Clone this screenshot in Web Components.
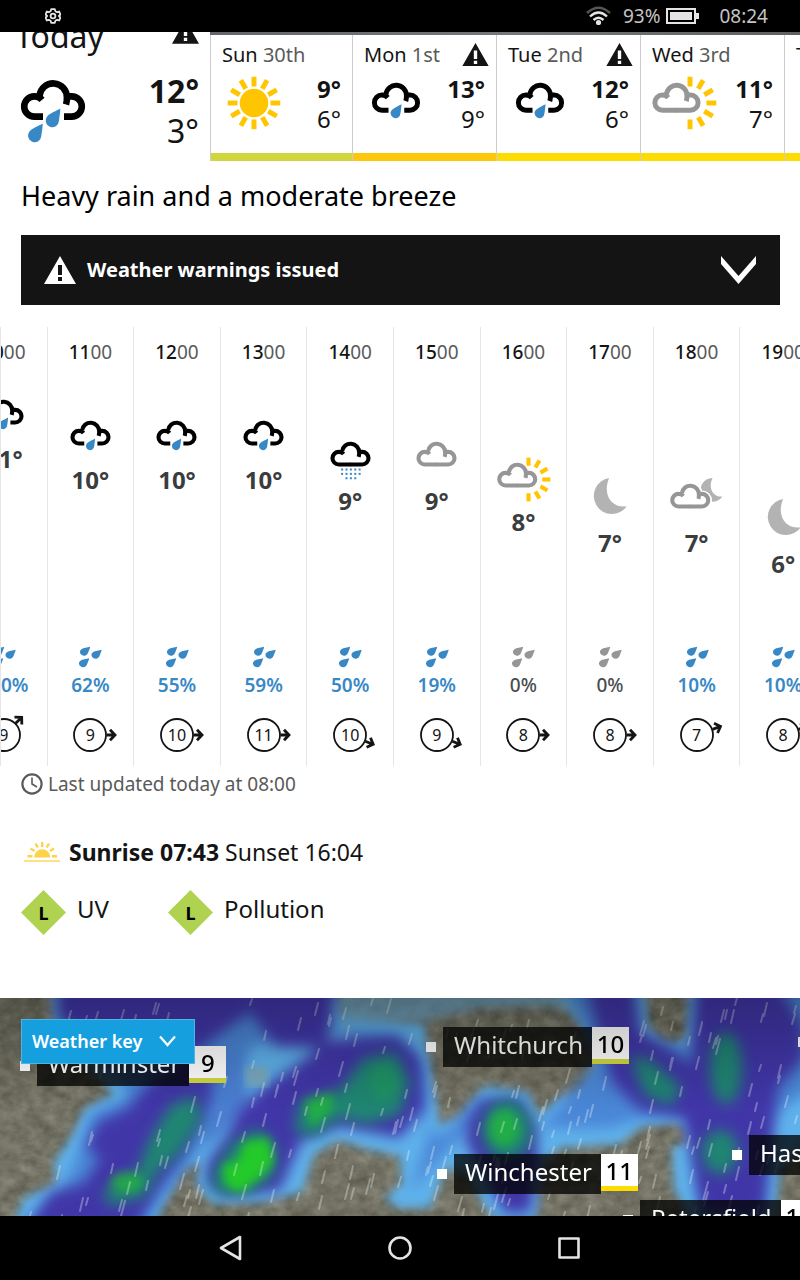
<!DOCTYPE html>
<html lang="en">
<head>
<meta charset="utf-8">
<meta name="viewport" content="width=device-width, initial-scale=1">
<title>Weather forecast</title>
<style>
html,body{margin:0;height:100%}
body{font-family:"Noto Sans","Open Sans",sans-serif;color:#141414;background:#fff}
</style>
</head>
<body>
<weather-screen></weather-screen>
<script>
const define = (name, render) => customElements.define(name, class extends HTMLElement {
  connectedCallback() {
    if (this.shadowRoot) return;
    this.attachShadow({ mode: 'open' }).innerHTML = '<style>*{box-sizing:border-box}</style>' + render(this);
  }
});

/* ---- weather symbols, all drawn on an 88x72 grid ---- */
const DROP = 'M8-12C8-8 7-3 6.6.5A6.6 6.6 0 1 1-5-4.2C-2-7.5 4-9.5 8-12z';
const ray = a => `<rect x="-3.3" y="-35" width="6.6" height="13" transform="rotate(${a})"/>`;
const rays = (n, step) => Array.from({ length: n }, (_, i) => ray(i * step)).join('');
const cloud = (color, open) => `<g fill="none" stroke="${color}" stroke-width="6.6">
  <path d="M${open ? '34' : '44'} 45.6H25.3a10.100 10.100 0 0 1 0-20.200c3 0 5.700 1 7.700 3.400"/>
  <path d="M30.600 24.500A13.700 13.700 0 0 1 57.900 26.500C58 29 57.800 31 57 33.500"/>
  <path d="M60 25.400h2.700a10.100 10.100 0 0 1 0 20.200H${open ? '55' : '43'}"/></g>`;
const drop = (x, y) => `<path fill="#3888c6" d="${DROP}" transform="translate(${x} ${y})"/>`;
const dots = [[52, [0, 1, 2, 3, 4]], [59, [0, 1, 2, 3, 4]], [66, [1, 2, 3]]]
  .map(([y, xs]) => xs.map(i => `<rect x="${29 + i * 7}" y="${y}" width="3.2" height="3.2"/>`).join('')).join('');
const SYMBOLS = {
  sun: `<g fill="#ffc500" transform="translate(44 36)"><circle r="19"/>${rays(12, 30)}</g>`,
  heavy: cloud('#000', true) + drop(43.3, 49.5) + drop(25.7, 64.5),
  light: cloud('#000', true) + drop(43.3, 49.5),
  drizzle: cloud('#000') + `<g fill="#3888c6">${dots}</g>`,
  cloud: cloud('#969696'),
  sunny: `<g fill="#ffc500" transform="translate(52 36)">${rays(7, 30)}</g><g transform="translate(-10)">${cloud('#969696')}</g>`,
  moon: `<path fill="#b3b3b3" d="M43.300 0A29 29 0 1 0 71.600 45.300C52 49 31 31 43.300 0z"/>`,
  cloudmoon: `<path fill="#b3b3b3" d="M69.700 0A19 19 0 1 0 85.300 29.500C73 32 61 18 69.700 0z"/>
    <g transform="translate(-10)"><path fill="#fff" stroke="#fff" stroke-width="12" d="M25 46a10 10 0 0 1 5-20a14 14 0 0 1 28 0h5a10 10 0 0 1 0 20z"/>${cloud('#969696')}</g>`
};
define('wx-icon', el => `<style>:host{display:block}svg{display:block;width:100%;height:auto}</style>
<svg viewBox="0 0 88 72" aria-hidden="true">${SYMBOLS[el.getAttribute('kind')]}</svg>`);

define('warning-icon', () => `<style>:host{display:block;width:27px}svg{display:block;width:100%}</style>
<svg viewBox="0 0 32 28" aria-hidden="true"><path fill="currentColor" fill-rule="evenodd" d="M16 0 32 28H0zM14 9v10h4V9zm0 12v4h4v-4z"/></svg>`);

define('status-bar', () => `<style>
:host{display:flex;align-items:center;gap:6px;height:32px;flex:none;background:#000;color:#c4c4c4;padding:0 32px 0 45px;font-size:19px;line-height:30px;position:relative}
.gear{margin-right:auto}.pct{margin-left:6px}time{margin-left:14px}svg{display:block}
</style>
<svg class="gear" width="16" height="16" viewBox="-8 -8 16 16" aria-label="Settings"><path fill="none" stroke="#e4e4e4" stroke-width="1.8" stroke-linejoin="round" d="M-1.800-6.800h3.600l.6 2 1.800 1 2-.7 1.200 3-1.500 1.500 1.500 1.500-1.200 3-2-.7-1.800 1-.6 2h-3.600l-.6-2-1.800-1-2 .7-1.200-3 1.500-1.500-1.500-1.500 1.200-3 2 .7 1.800-1z"/><circle r="2.400" fill="none" stroke="#e4e4e4" stroke-width="1.8"/></svg>
<svg width="25" height="20" viewBox="0 0 25 20" aria-label="Wi-Fi"><g fill="none" stroke="#e4e4e4" stroke-width="2.4"><path stroke="#555" d="M1 7Q12.500-3.500 24 7"/><path d="M4 10.500Q12.500 2.500 21 10.500M7.500 14Q12.500 9.500 17.500 14"/></g><circle cx="12.500" cy="16.500" r="2.600" fill="#e4e4e4"/></svg>
<span class="pct">93%</span>
<svg width="33" height="16" viewBox="0 0 33 16" aria-label="Battery"><path fill="none" stroke="#e4e4e4" stroke-width="2" d="M1 1h28v14H1z"/><path fill="#e4e4e4" d="M4 4h22v8H4zM30 5h3v6h-3z"/></svg>
<time>08:24</time>`);

define('today-card', () => `<style>
:host{display:flex;flex-direction:column;justify-content:flex-end;height:129px;overflow:hidden;padding:0 11px 10px 9px}
.head{display:flex;align-items:flex-end;justify-content:space-between;flex:none;height:48px;margin-bottom:11px}
h2{margin:0 0 0 6px;font-size:32px;line-height:48px;font-weight:400}
warning-icon{margin-bottom:16px}
.body{display:flex;justify-content:space-between;flex:none}
wx-icon{width:88px}
.t{display:grid;font-size:32px;line-height:40px;text-align:right}
b{font-weight:700}
</style>
<div class="head"><h2>Today</h2><warning-icon></warning-icon></div>
<div class="body"><wx-icon kind="heavy"></wx-icon><div class="t"><b>12°</b><span>3°</span></div></div>`);

define('day-card', el => `<style>
:host{display:block;border-left:1px solid #ccc;background:#fff}
a{display:flex;flex-direction:column;height:126px;color:inherit;text-decoration:none;border-bottom:8px solid ${el.getAttribute('tone')}}
.head{display:flex;justify-content:space-between;align-items:center;height:39px;padding:0 7px 0 11px;font-size:20px;white-space:nowrap}
.head span span{color:#5a5a5a}
.body{display:flex;justify-content:space-between;padding:0 11px 0 10px}
wx-icon{width:66px;margin-top:2px}
.t{display:grid;font-size:24px;line-height:30px;text-align:right}
</style>
<a href="#${el.getAttribute('day')}"><div class="head"><span>${el.getAttribute('day')} <span>${el.getAttribute('date')}</span></span>${el.hasAttribute('warn') ? '<warning-icon></warning-icon>' : ''}</div>
<div class="body"><wx-icon kind="${el.getAttribute('kind')}"></wx-icon><div class="t"><b>${el.getAttribute('hi')}°</b><span>${el.getAttribute('lo')}°</span></div></div></a>`);

define('day-strip', () => `<style>
:host{display:grid;grid-template-columns:210px 1fr;flex:none}
.days{display:grid;grid-template-columns:142px repeat(4,144px);padding-top:3px;background:linear-gradient(90deg,#63666a,#75787b 50%,#5e615f);overflow:hidden}
</style>
<today-card></today-card>
<nav class="days" aria-label="Days">
<day-card day="Sun" date="30th" kind="sun" hi="9" lo="6" tone="#d0d73e"></day-card>
<day-card day="Mon" date="1st" kind="light" hi="13" lo="9" tone="#fdc70c" warn></day-card>
<day-card day="Tue" date="2nd" kind="light" hi="12" lo="6" tone="#ffdc00" warn></day-card>
<day-card day="Wed" date="3rd" kind="sunny" hi="11" lo="7" tone="#ffdc00"></day-card>
<day-card day="Thu" date="4th" kind="light" hi="11" lo="7" tone="#ffdc00"></day-card>
</nav>`);

define('warning-banner', () => `<style>
:host{display:block}
button{display:flex;align-items:center;gap:11px;width:100%;height:70px;border:0;background:#141414;color:#fff;font:700 20px "Noto Sans",sans-serif;padding:0 23px;text-align:left}
span{padding-bottom:2px}
warning-icon{width:32px}
.chev{margin-left:auto}
</style>
<button type="button"><warning-icon></warning-icon><span><slot></slot></span>
<svg class="chev" width="37" height="30" viewBox="0 0 37 30" aria-hidden="true"><path fill="#fff" d="M1 1 18.500 21 36 1v8L18.500 29 1 9z"/></svg></button>`);

const small = (x, y) => `<path d="${DROP}" transform="translate(${x} ${y}) rotate(12) scale(.62 .54)"/>`;
define('hour-slot', el => {
  const a = n => el.getAttribute(n), dry = a('rain') === '0';
  return `<style>
:host{display:block;border-left:1px solid #e6e6e6;min-width:0}
button{display:flex;flex-direction:column;align-items:center;width:100%;height:439px;border:0;background:none;padding:10px 0 13px;font:inherit;color:#141414;overflow:visible}
.time{font-size:19px;line-height:30px;font-weight:500}.time span{color:#5a5a5a;font-weight:400}
.mark{margin-top:calc(27px + (11 - ${a('temp')}) * 21px);display:grid;justify-items:center}
wx-icon{width:55px}
.temp{font-size:24px;line-height:40px;font-weight:700;color:#3a3c3e}
.rain{margin-top:auto;fill:${dry ? '#969696' : '#3888c6'}}
.pct{font-size:19px;line-height:34px;font-weight:${dry ? 500 : 600};color:${dry ? '#4a4c4e' : '#3888c6'}}
.wind{display:grid;place-items:center;width:60px;height:36px;margin-top:15px;font-size:16px}
.wind>*{grid-area:1/1}.wind svg{overflow:visible;fill:none;stroke:#141414}
svg{display:block}
</style>
<button type="button"><span class="time">${a('hour')}<span>00</span></span>
<span class="mark"><wx-icon kind="${a('kind')}"></wx-icon><span class="temp">${a('temp')}°</span></span>
<svg class="rain" width="24" height="22" viewBox="0 0 24 22" aria-hidden="true">${small(6, 6)}${small(17.5, 9)}${small(5, 17.5)}</svg>
<span class="pct">${a('rain')}%</span>
<span class="wind"><svg width="60" height="36" viewBox="-30 -18 60 36" aria-hidden="true"><circle r="16" stroke-width="1.8"/><path stroke-width="2.800" transform="rotate(${a('dir')})" d="M16.500 0H24.500M20-5.200 25 0 20 5.200"/></svg><span>${a('wind')}</span></span></button>`;
});

const HOURS = [
  ['10', 11, 'light', 100, 9, -45], ['11', 10, 'light', 62, 9, 0], ['12', 10, 'light', 55, 10, 0],
  ['13', 10, 'light', 59, 11, 0], ['14', 9, 'drizzle', 50, 10, 22], ['15', 9, 'cloud', 19, 9, 22],
  ['16', 8, 'sunny', 0, 8, 0], ['17', 7, 'moon', 0, 8, 0], ['18', 7, 'cloudmoon', 10, 7, -20], ['19', 6, 'moon', 10, 8, -20]];
define('hour-strip', () => `<style>
:host{display:block;border-left:1px solid #e6e6e6;overflow:hidden}
.row{display:grid;grid-template-columns:repeat(10,1fr);width:866px;margin-left:-41px}
</style>
<div class="row">${HOURS.map(([h, t, k, r, w, d]) => `<hour-slot hour="${h}" temp="${t}" kind="${k}" rain="${r}" wind="${w}" dir="${d}"></hour-slot>`).join('')}</div>`);

define('level-badge', el => `<style>
:host{display:flex;align-items:center;gap:11px;font-size:24px;line-height:36px}
.d{display:grid;place-items:center;width:45px;height:45px;background:#afd250;clip-path:polygon(50% 0,100% 50%,50% 100%,0 50%);font-size:18px;font-weight:700;color:#000}
.n{margin-bottom:7px}
</style><span class="d">${el.getAttribute('level')}</span><span class="n"><slot></slot></span>`);

define('day-details', () => `<style>
:host{display:block;padding:0 21px}
.upd{display:flex;align-items:center;gap:5px;margin:0;font-size:19px;line-height:36px;color:#5a5a5a}
.sun{display:flex;align-items:center;margin:32px 0 20px;font-size:23px;line-height:36px;padding-left:3px;gap:9px}
.lv{display:grid;grid-template-columns:147px 1fr;margin-bottom:63px}
svg{display:block}
</style>
<p class="upd"><svg width="22" height="22" viewBox="0 0 22 22" fill="none" stroke="#5a5a5a" aria-hidden="true"><circle cx="11" cy="11" r="9.600" stroke-width="2.200"/><path stroke-width="1.600" d="M11 4.500V11l5 3"/></svg><span>Last updated today at 08:00</span></p>
<div class="sun"><svg width="36" height="22" viewBox="0 0 36 22" aria-hidden="true"><path stroke="#fdd758" stroke-width="1.600" d="M0 20h36"/><path fill="#fdd34a" d="M10 16.500a8.200 8.200 0 0 1 16.400 0z"/><g stroke="#fdd34a" stroke-width="2.400"><path d="M18.200 1v5M11.500 2.500l2.300 4M25 2.500l-2.300 4M6.500 7.500l4 2.500M30 7.500l-4 2.500M3.500 15.200h5M28 15.200h5"/></g></svg><span><b>Sunrise 07:43</b> Sunset 16:04</span></div>
<div class="lv"><level-badge level="L">UV</level-badge><level-badge level="L">Pollution</level-badge></div>`);

define('place-pin', el => `<style>
:host{position:absolute;display:flex;gap:7px;height:40px;white-space:nowrap}
i{width:10px;height:10px;background:#fff;margin-top:15px}
.p{display:flex}
.n{background:rgba(0,0,0,.76);color:#fff;font-size:24px;line-height:36px;height:40px;padding:0 9px 0 11px}
.t{width:37px;height:37px;background:#fff;color:#000;border-bottom:5px solid ${el.getAttribute('tone')};font-size:24px;line-height:33px;font-weight:500;text-align:center}
</style><i></i><span class="p"><span class="n"><slot></slot></span><span class="t">${el.getAttribute('temp')}</span></span>`);

/* rain radar: each band of intensity is a blurred layer above the terrain */
let seed = 7;
const rnd = () => (seed = (seed * 16807) % 2147483647) / 2147483647;
const streaks = Array.from({ length: 260 }, () => {
  const x = Math.round(rnd() * 800), y = Math.round(rnd() * 218), l = 6 + Math.round(rnd() * 9);
  return `M${x} ${y}l${-Math.round(l / 4)} ${l}`;
}).join('');
define('radar-map', () => `<style>
:host{display:block;position:relative;overflow:hidden;flex:1;min-height:218px;background:#6c6c60}
.map{position:absolute;inset:0;width:100%;height:100%}
.shade{position:absolute;inset:0 0 auto;height:110px;background:linear-gradient(rgba(0,0,0,.26),rgba(0,0,0,0));pointer-events:none}
.key{position:absolute;left:21px;top:21px;display:flex;align-items:center;gap:17px;height:45px;width:174px;padding:0 10px 2px;border:1px solid #4db4e4;background:#169fdf;color:#fff;font:600 18px "Noto Sans",sans-serif;white-space:nowrap}
</style>
<svg class="map" viewBox="0 0 800 218" preserveAspectRatio="xMidYMid slice" aria-hidden="true">
<defs>
<filter id="t" x="0" y="0" width="100%" height="100%" color-interpolation-filters="sRGB"><feTurbulence type="fractalNoise" baseFrequency=".07 .09" numOctaves="4" seed="4"/><feColorMatrix values=".2 .1 0 0 .3  .2 .1 0 0 .295  .2 .1 0 0 .24  0 0 0 0 1"/></filter>
<filter id="b3" x="-10%" y="-10%" width="120%" height="120%" color-interpolation-filters="sRGB"><feGaussianBlur stdDeviation="5"/></filter>
<filter id="b5" x="-10%" y="-20%" width="120%" height="140%" color-interpolation-filters="sRGB"><feGaussianBlur stdDeviation="7"/></filter>
<clipPath id="rain"><path d="M52-20V30L110 92 55 165 10 230H800V-20z"/></clipPath>
</defs>
<rect width="800" height="218" filter="url(#t)"/>
<g fill="#5fb2ec" filter="url(#b3)">
<path d="M52-20 54 40 90 70 114 96 84 112 72 138 54 164 56 186 24 200 8 240H148L166 200 182 170 200 164 210 140 200 165 196 186 212 205 262 204 302 194 314 156 338 142 372 152 400 158 402 185 385 200 398 210 430 210 446 170 470 175 480 200 494 222 536 222 542 165 560 150 620 146 642 128 678 124 692 142 672 150 674 190 694 230H774L780 170 820 130V10L770-20H690L686 40 668 50 648 28 644-20H548L584 30 600 60 590 94 560 100 538 118 528 94 484 88 462 118 440 128 430 70 424 26 392 22 340 16 340-20z"/></g>
<g fill="#6ba8cc" opacity=".7" filter="url(#b3)"><path d="M335-20h230l25 40-40-12-70 2-60 14-80 4z"/></g>
<g fill="#4a86d6" filter="url(#b5)"><path d="M60-20 66 36 120 80 128 100 92 114 80 150 64 190 20 230H140L200 150 250 50 300 30 400 40 424 70 428 140 410 195 440 160 470 130 500 100 540 130 610 130 640 120 690 115 700 200 760 218 770 120 810 90V-20H710L690 50 640 40 630-20H560L600 60 540 130 480 100 440 140 320 10z"/></g>
<g fill="#4a7fd2" filter="url(#b5)"><path d="M196 60 240 50 250 110 226 132 204 150 198 110z"/></g>
<g fill="#4136a8" filter="url(#b5)">
<path d="M58-20V22L110 46 195 56 222 34 250 14 275 48 326 50 338-20z"/>
<path d="M150 84 128 110 98 124 86 150 100 160 84 185 50 195 28 230H136L158 190 184 155 208 110 214 76 190 56z"/>
<path d="M330 42 298 66 266 88 240 110 226 140 208 164 206 186 226 198 280 192 294 160 302 142 340 128 400 140 424 110 420 60 396 38z"/>
<path d="M468 122 482 102 520 100 536 130 538 165 530 215H504L480 168 466 145z"/>
<path d="M584-20H632L640 34 664 48 692 66 696-20H774L804 30V60L778 90 764 218H702L690 150 684 120 640 112 612 84 600 40z"/>
</g>
<g fill="#1f8672" filter="url(#b5)">
<path d="M172 106 196 98 202 122 176 160 158 172 146 198 110 208 102 194 138 172 150 140z"/>
<path d="M364 60 396 54 410 84 400 116 368 126 338 120 316 138 294 134 300 104 340 92z"/>
<path d="M230 146 258 130 276 146 274 178 250 194 216 196 212 178z"/>
<ellipse cx="507" cy="132" rx="25" ry="30"/><ellipse cx="726" cy="70" rx="16" ry="36"/><path d="M630 58 650 62 682 90 670 108 644 96z"/><ellipse cx="720" cy="154" rx="18" ry="22"/>
</g>
<g fill="#24c92a" filter="url(#b3)">
<path d="M244 144 268 140 274 164 262 178 240 195 226 188 222 168 238 162z"/>
<g opacity=".6"><ellipse cx="504" cy="130" rx="15" ry="18"/><path d="M304 102 332 94 334 110 312 130z"/><ellipse cx="126" cy="184" rx="16" ry="10"/><ellipse cx="384" cy="84" rx="14" ry="18" opacity=".3"/></g>
</g>
<rect x="246" y="68" width="22" height="20" fill="#7aa8b8" filter="url(#b3)"/>
<path clip-path="url(#rain)" d="${streaks}" stroke="#fff" stroke-opacity=".3" stroke-width="2" stroke-linecap="round"/>
</svg>
<place-pin temp="9" tone="#d0d73e" style="left:20px;top:48px">Warminster</place-pin>
<place-pin temp="10" tone="#d0d73e" style="left:426px;top:29px">Whitchurch</place-pin>
<place-pin temp="11" tone="#ffdc00" style="left:437px;top:156px">Winchester</place-pin>
<place-pin temp="11" tone="#ffdc00" style="left:732px;top:137px">Haslemere</place-pin>
<place-pin temp="10" tone="#ffdc00" style="left:623px;top:202px">Petersfield</place-pin>
<place-pin temp="10" tone="#ffdc00" style="left:798px;top:24px">Bracknell</place-pin>
<div class="shade"></div>
<button class="key" type="button">Weather key<svg width="17" height="12" viewBox="0 0 17 12" aria-hidden="true"><path fill="none" stroke="#fff" stroke-width="2.200" d="M1 1.500 8.500 10 16 1.500"/></svg></button>`);

define('nav-bar', () => `<style>
:host{display:flex;justify-content:center;gap:121px;align-items:center;height:64px;flex:none;background:#000}
button{display:grid;place-items:center;width:48px;height:48px;border:0;padding:0;background:none}
svg{fill:none;stroke:#e4e4e4;stroke-width:2.600;stroke-linejoin:round}
</style>
<button type="button" aria-label="Back"><svg width="24" height="26" viewBox="0 0 24 26"><path d="M21 2v22L2 13z"/></svg></button>
<button type="button" aria-label="Home"><svg width="24" height="24" viewBox="0 0 24 24"><circle cx="12" cy="12" r="10.500"/></svg></button>
<button type="button" aria-label="Recent apps"><svg width="22" height="22" viewBox="0 0 22 22"><path d="M1.500 1.500h19v19h-19z"/></svg></button>`);

define('weather-screen', () => `<style>
:host{display:flex;flex-direction:column;min-height:100%}
h1{margin:17px 21px 21px;font-size:27px;line-height:36px;font-weight:400;color:#000}
warning-banner{margin:0 20px 22px 21px}
</style>
<status-bar></status-bar><day-strip></day-strip>
<h1>Heavy rain and a moderate breeze</h1>
<warning-banner>Weather warnings issued</warning-banner>
<hour-strip></hour-strip><day-details></day-details><radar-map></radar-map><nav-bar></nav-bar>`);
</script>
</body>
</html>
